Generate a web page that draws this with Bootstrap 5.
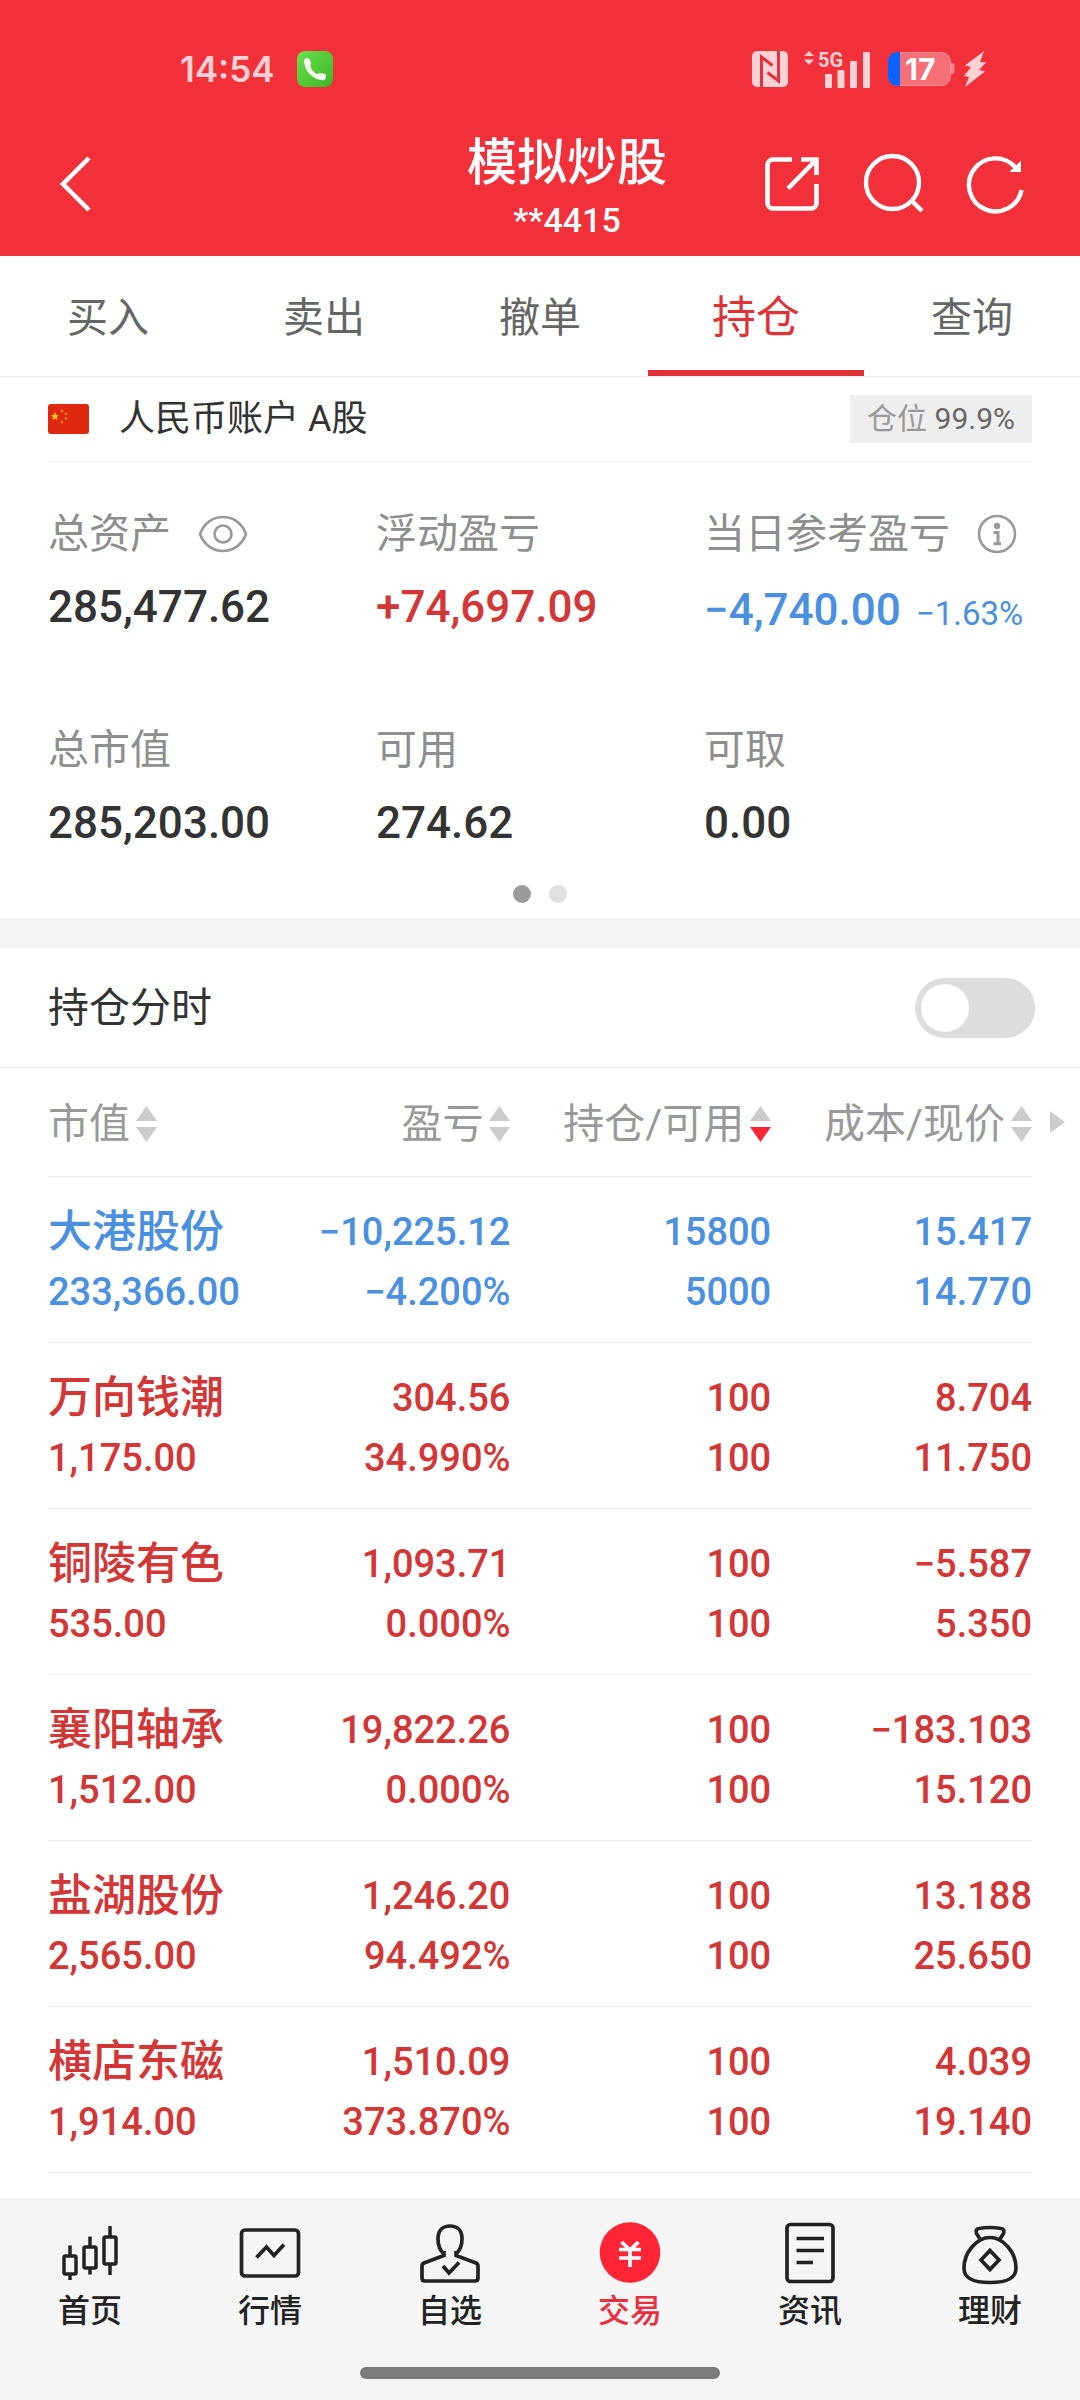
<!DOCTYPE html>
<html lang="zh-CN">
<head>
<meta charset="utf-8">
<meta name="viewport" content="width=device-width, initial-scale=1">
<title>模拟炒股</title>
<link rel="stylesheet" href="https://cdn.jsdelivr.net/npm/bootstrap@5.3.0/dist/css/bootstrap.min.css">
<script src="https://cdn.jsdelivr.net/npm/bootstrap@5.3.0/dist/js/bootstrap.bundle.min.js"></script>
<style>
  body { font-family: Roboto, "Noto Sans CJK SC", sans-serif; font-size: 41px; line-height: 60px; color: #333; background: #fff; }
  svg { display: block; flex: none; overflow: visible; }
  button { background: none; border: 0; padding: 0; color: inherit; font: inherit; }
  a { text-decoration: none; }
  .up { color: #d43535; }
  .down { color: #4a90e2; }
  .hair { border-bottom: 1px solid #ececec; }

  .app-header { background: #f23039; color: #fff; }
  .status-bar { height: 112px; padding: 26px 92px 0 180px; color: #ffd0d4; }
  .clock { font-family: Inter, sans-serif; font-size: 35px; font-weight: 600; margin-right: 22px; }
  .title-bar { display: grid; grid-template-columns: 1fr auto 1fr; height: 144px; padding: 0 4px 0 58px; }
  .title-box { padding-top: 6px; }
  .title-box h1 { font-size: 50px; line-height: 66px; font-weight: 500; }
  .account-no { font-size: 34px; line-height: 48px; font-weight: 500; }
  .tools { gap: 42px; margin-right: 50px; }

  .trade-tabs .nav-link { color: #666; border-radius: 0; padding: 32px 0 22px; border-bottom: 6px solid transparent; }
  .trade-tabs .nav-link.active { color: #e03236; font-size: 44px; border-bottom-color: #e03236; }

  .gutter { margin-left: 48px; margin-right: 48px; }
  .currency-row { height: 85px; font-size: 36px; white-space: nowrap; }
  .currency-row .flag { margin-right: 29px; }
  .position-rate { background: #eee; font-size: 30px; line-height: 48px; padding: 0 17px; color: #999; }
  .position-rate b { font-weight: 400; color: #666; }

  .asset-grid { display: grid; grid-template-columns: repeat(3, 1fr); row-gap: 73px; padding-top: 42px; }
  .asset-grid dt { color: #8e8e8e; font-weight: 400; margin-bottom: 13px; display: flex; align-items: center; gap: 27px; white-space: nowrap; }
  .asset-grid dd { font-size: 44px; font-weight: 500; margin: 0; white-space: nowrap; }
  .asset-grid dd.pair { line-height: 66px; }
  .asset-grid dd span { font-size: 33px; margin-left: 15px; font-weight: 400; }
  .pager { gap: 18px; padding: 32px 0 15px; }
  .pager i { width: 18px; height: 18px; border-radius: 50%; background: #e0e0e0; }
  .pager i.on { background: #9b9b9b; }
  .band { height: 30px; background: #f4f4f4; }

  .switch-row { height: 120px; padding: 0 45px 0 48px; }
  .form-switch .form-check-input { width: 120px; height: 60px; margin: 0; border: 0; background-color: #ddd; border-radius: 30px;
    background-image: url("data:image/svg+xml,%3csvg xmlns='http://www.w3.org/2000/svg' viewBox='0 0 60 60'%3e%3ccircle cx='30' cy='30' r='24' fill='%23fff'/%3e%3c/svg%3e"); }

  .holdings { table-layout: fixed; width: 100%; }
  .holdings th { font-weight: 400; color: #999; padding: 26px 0 22px; white-space: nowrap; }
  .holdings th button { display: inline-flex; align-items: center; gap: 6px; vertical-align: top; }
  .holdings td { font-size: 38px; font-weight: 500; padding: 25px 0 20px; }
  .holdings tr { border-bottom: 1px solid #ececec; }
  .stock { font-size: 44px; }
  .more { position: absolute; left: 100%; top: 43px; margin-left: 18px; }

  .tab-bar { background: #f5f5f5; height: 202px; padding-top: 23px; }
  .tab-bar .nav-link { color: #222; font-size: 32px; line-height: 52px; padding: 0; font-weight: 500; }
  .tab-bar .nav-link.active { color: #e8303f; }
  .home-bar { width: 33.333%; height: 12px; border-radius: 6px; background: #7b7b7b; margin-top: 30px; }
</style>
</head>
<body class="d-flex flex-column min-vh-100">

<header class="app-header">
  <div class="status-bar d-flex align-items-center justify-content-between">
    <div class="d-flex align-items-center">
      <span class="clock">14:54</span>
      <svg width="36" height="36" viewBox="0 0 36 36" role="img" aria-label="通话">
        <defs><linearGradient id="call" x1="0" y1="0" x2="1" y2="1"><stop offset="0" stop-color="#6be04c"/><stop offset="1" stop-color="#3db526"/></linearGradient></defs>
        <rect width="36" height="36" rx="8" fill="url(#call)"/>
        <path d="M7 9.500C7.500 7 11 6 12.500 8.500C14 11 14.500 12.500 13.300 14.500C13 17 17 21.500 20 23.200C22 22 26 21.800 28.500 23.500C29.500 25 29 28 27.500 29C23 30 17 27.500 13 23.500C9 19.500 7 14 7 9.500Z" fill="#f4fff0"/>
      </svg>
    </div>
    <div class="d-flex align-items-center">
      <svg class="me-3" width="36" height="36" viewBox="0 0 36 36">
        <rect width="36" height="36" rx="5" fill="#ffd0d4"/>
        <path d="M9.500 36V6L20.500 14.500M26.500 0V30L15.500 21.500" fill="none" stroke="#e2323b" stroke-width="3"/>
      </svg>
      <svg width="68" height="38" viewBox="0 0 68 38" fill="#ffd0d4">
        <path d="M0 6L5 1L10 6ZM0 9.500L5 15L10 9.500Z"/>
        <text x="14" y="17" font-family="Roboto, sans-serif" font-size="20" font-weight="700">5G</text>
        <rect x="21" y="24" width="7" height="14" rx="1"/><rect x="33.500" y="20" width="7" height="18" rx="1"/><rect x="46" y="11" width="7" height="27" rx="1"/><rect x="59" y="2" width="7" height="36" rx="1"/>
      </svg>
      <svg class="ms-3" width="66" height="36" viewBox="0 0 66 36">
        <path d="M63 12h1.500a2 2 0 0 1 2 2v6a3 3 0 0 1-3.500 3Z" fill="#f8848a"/>
        <clipPath id="cell"><rect x="0" y="1" width="63" height="34" rx="9"/></clipPath>
        <rect x=".5" y="1.500" width="62" height="33" rx="9" fill="#f66f76" stroke="#f98d93"/>
        <rect x="0" y="1" width="12" height="34" fill="#0a62ff" clip-path="url(#cell)"/>
        <text x="17" y="29" font-family="Inter, sans-serif" font-size="30" font-weight="700" fill="#fff">17</text>
      </svg>
      <svg class="ms-2" width="26" height="38" viewBox="0 0 26 38"><path d="M22 1L3 15.500L9 17L2 26L7 27L3 37L23 21.500L17 20L24 12.500L18 12Z" fill="#ffd0d4"/></svg>
    </div>
  </div>
  <div class="title-bar align-items-center">
    <button type="button" aria-label="返回" class="text-start">
      <svg width="34" height="56" viewBox="0 0 34 56" fill="none" stroke="#fff" stroke-width="4.500"><path d="M31 2L5 28L31 54"/></svg>
    </button>
    <div class="title-box text-center">
      <h1 class="m-0">模拟炒股</h1>
      <div class="account-no">**4415</div>
    </div>
    <div class="tools d-flex justify-content-end">
      <button type="button" aria-label="分享"><svg width="60" height="60" viewBox="0 0 60 60" fill="none" stroke="#fff" stroke-width="4.600">
        <path d="M30 5.500H11a5.500 5.500 0 0 0-5.500 5.500V49a5.500 5.500 0 0 0 5.500 5.500H49a5.500 5.500 0 0 0 5.500-5.500V30M39 5.500H54.500V21M54 6L26 34.500"/></svg></button>
      <button type="button" aria-label="搜索"><svg width="60" height="60" viewBox="0 0 60 60" fill="none" stroke="#fff" stroke-width="4.400">
        <circle cx="28.500" cy="28.500" r="26.500"/><path d="M47.500 46.500L58 57"/></svg></button>
      <button type="button" aria-label="刷新"><svg width="60" height="60" viewBox="0 0 60 60" fill="none" stroke="#fff" stroke-width="4.400">
        <path d="M55.500 36A26.500 26.500 0 1 1 49.500 13.500"/><path d="M55 6.500V18H43.500Z" fill="#fff" stroke="none"/></svg></button>
    </div>
  </div>
</header>

<nav class="trade-tabs hair" aria-label="交易功能">
  <ul class="nav nav-justified">
    <li class="nav-item"><a class="nav-link" href="#buy">买入</a></li>
    <li class="nav-item"><a class="nav-link" href="#sell">卖出</a></li>
    <li class="nav-item"><a class="nav-link" href="#cancel">撤单</a></li>
    <li class="nav-item"><a class="nav-link active" aria-current="page" href="#hold">持仓</a></li>
    <li class="nav-item"><a class="nav-link" href="#query">查询</a></li>
  </ul>
</nav>

<main>
  <section class="gutter">
    <div class="currency-row hair d-flex align-items-center">
      <svg class="flag" width="42" height="30" viewBox="0 0 42 30">
        <rect width="41" height="30" rx="3" fill="#de2910"/>
        <path d="M7 8L8.200 11L11 11.200L8.900 13.100L9.600 16L7 14.400L4.400 16L5.100 13.100L3 11.200L5.800 11Z" fill="#ffc61a"/>
        <g fill="#f08a1c"><circle cx="14" cy="7" r="1.300"/><circle cx="18" cy="10" r="1.300"/><circle cx="18" cy="14.500" r="1.300"/><circle cx="14" cy="18" r="1.300"/></g>
      </svg>
      <span>人民币账户 A股</span>
      <span class="position-rate ms-auto">仓位 <b>99.9%</b></span>
    </div>
    <dl class="asset-grid m-0">
      <div><dt>总资产
        <button type="button" aria-label="隐藏金额"><svg width="50" height="38" viewBox="0 0 50 38" fill="none" stroke="#999" stroke-width="2.600"><path d="M2 19C6 8 15 2 25 2S44 8 48 19C44 30 35 36 25 36S6 30 2 19Z"/><circle cx="25" cy="19" r="8.500"/></svg></button>
      </dt><dd>285,477.62</dd></div>
      <div><dt>浮动盈亏</dt><dd class="up">+74,697.09</dd></div>
      <div><dt>当日参考盈亏
        <button type="button" aria-label="说明"><svg width="40" height="40" viewBox="0 0 40 40" fill="none" stroke="#999" stroke-width="2.600"><circle cx="20" cy="20" r="18"/><circle cx="20" cy="12" r="3.200" fill="#999" stroke="none"/><path d="M16.500 18.500H21V29.500M16.500 29.800H24" stroke-width="3"/></svg></button>
      </dt><dd class="down pair">−4,740.00<span>−1.63%</span></dd></div>
      <div><dt>总市值</dt><dd>285,203.00</dd></div>
      <div><dt>可用</dt><dd>274.62</dd></div>
      <div><dt>可取</dt><dd>0.00</dd></div>
    </dl>
    <div class="pager d-flex justify-content-center"><i class="on"></i><i></i></div>
  </section>

  <div class="band"></div>

  <section>
    <div class="switch-row hair d-flex align-items-center justify-content-between">
      <label for="intraday">持仓分时</label>
      <div class="form-check form-switch p-0 m-0 d-flex"><input class="form-check-input" type="checkbox" role="switch" id="intraday"></div>
    </div>
    <svg class="d-none">
      <symbol id="sort" viewBox="0 0 21 36"><path d="M10.500 0L21 15H0Z" fill="#ccc"/><path d="M0 21H21L10.500 36Z" fill="currentColor"/></symbol>
    </svg>
    <div class="gutter position-relative">
      <table class="holdings">
        <colgroup><col style="width:23.5%"><col style="width:23.5%"><col style="width:26.5%"><col style="width:26.5%"></colgroup>
        <thead>
          <tr>
            <th scope="col"><button type="button">市值<svg width="21" height="36" color="#ccc"><use href="#sort"/></svg></button></th>
            <th scope="col" class="text-end"><button type="button">盈亏<svg width="21" height="36" color="#ccc"><use href="#sort"/></svg></button></th>
            <th scope="col" class="text-end"><button type="button">持仓/可用<svg width="21" height="36" color="#ff2436"><use href="#sort"/></svg></button></th>
            <th scope="col" class="text-end"><button type="button">成本/现价<svg width="21" height="36" color="#ccc"><use href="#sort"/></svg></button></th>
          </tr>
        </thead>
        <tbody>
          <tr class="down"><td><div class="stock">大港股份</div>233,366.00</td><td class="text-end">−10,225.12<br>−4.200%</td><td class="text-end">15800<br>5000</td><td class="text-end">15.417<br>14.770</td></tr>
          <tr class="up"><td><div class="stock">万向钱潮</div>1,175.00</td><td class="text-end">304.56<br>34.990%</td><td class="text-end">100<br>100</td><td class="text-end">8.704<br>11.750</td></tr>
          <tr class="up"><td><div class="stock">铜陵有色</div>535.00</td><td class="text-end">1,093.71<br>0.000%</td><td class="text-end">100<br>100</td><td class="text-end">−5.587<br>5.350</td></tr>
          <tr class="up"><td><div class="stock">襄阳轴承</div>1,512.00</td><td class="text-end">19,822.26<br>0.000%</td><td class="text-end">100<br>100</td><td class="text-end">−183.103<br>15.120</td></tr>
          <tr class="up"><td><div class="stock">盐湖股份</div>2,565.00</td><td class="text-end">1,246.20<br>94.492%</td><td class="text-end">100<br>100</td><td class="text-end">13.188<br>25.650</td></tr>
          <tr class="up"><td><div class="stock">横店东磁</div>1,914.00</td><td class="text-end">1,510.09<br>373.870%</td><td class="text-end">100<br>100</td><td class="text-end">4.039<br>19.140</td></tr>
        </tbody>
      </table>
      <svg class="more" width="15" height="22" viewBox="0 0 15 22"><path d="M0 0L15 11L0 22Z" fill="#ccc"/></svg>
    </div>
  </section>
</main>

<footer class="tab-bar mt-auto">
  <ul class="nav nav-justified">
    <li class="nav-item"><a class="nav-link" href="#home">
      <svg class="mx-auto" width="64" height="64" viewBox="0 0 64 64" fill="none" stroke="#222" stroke-width="3.500"><rect x="6" y="35" width="12" height="18" rx="1.500"/><path d="M12 24.500V34M12 54V59"/><rect x="26" y="26" width="12" height="21" rx="1.500"/><path d="M32 15.500V25M32 48V53.500"/><rect x="46" y="16" width="12" height="27" rx="1.500"/><path d="M52 5V15M52 44V54"/></svg>首页</a></li>
    <li class="nav-item"><a class="nav-link" href="#market">
      <svg class="mx-auto" width="64" height="64" viewBox="0 0 64 64" fill="none" stroke="#222" stroke-width="3.700"><rect x="3.500" y="9" width="57" height="46" rx="3.500"/><path d="M18.500 36.500L28.500 26L36 34.500L46 23.500"/></svg>行情</a></li>
    <li class="nav-item"><a class="nav-link" href="#watch">
      <svg class="mx-auto" width="64" height="64" viewBox="0 0 64 64" fill="none" stroke="#222" stroke-width="3.700"><path d="M26 30V34.500L6 42Q4 43 4 45V57Q4 60 7 60H57Q60 60 60 57V45Q60 43 58 42L38 34.500V30"/><path d="M26.500 33C22 30 20 26 20 18C20 9 25 5 32 5S44 9 44 18C44 26 42 30 37.500 33"/><path d="M25 45L31 52L41 41.500"/></svg>自选</a></li>
    <li class="nav-item"><a class="nav-link active" aria-current="page" href="#trade">
      <svg class="mx-auto" width="64" height="64" viewBox="0 0 64 64" fill="none"><circle cx="32" cy="31.500" r="30.300" fill="#ff2436"/><path d="M23.500 21L32 29L40.500 21M32 28V46M21 28.500H43M21 37H43" stroke="#fff" stroke-width="3.700"/></svg>交易</a></li>
    <li class="nav-item"><a class="nav-link" href="#news">
      <svg class="mx-auto" width="64" height="64" viewBox="0 0 64 64" fill="none" stroke="#222" stroke-width="3.700"><rect x="9" y="3.500" width="46" height="57" rx="3.500"/><path d="M18.500 17.500H46M18.500 29.500H46M18.500 41.500H35"/></svg>资讯</a></li>
    <li class="nav-item"><a class="nav-link" href="#wealth">
      <svg class="mx-auto" width="64" height="64" viewBox="0 0 64 64" fill="none" stroke="#222" stroke-width="3.700"><path d="M32 16.500C19 16.500 6 31 6 47C6 57 14 61.500 32 61.500S58 57 58 47C58 31 45 16.500 32 16.500Z"/><path d="M22 18L18.500 12.500Q17 8 21 7.500Q32 5.500 43 7.500Q47 8 45.500 12.500L42 18"/><path d="M32 29.500L41 39L32 48.500L23 39Z"/></svg>理财</a></li>
  </ul>
  <div class="home-bar mx-auto"></div>
</footer>

</body>
</html>
